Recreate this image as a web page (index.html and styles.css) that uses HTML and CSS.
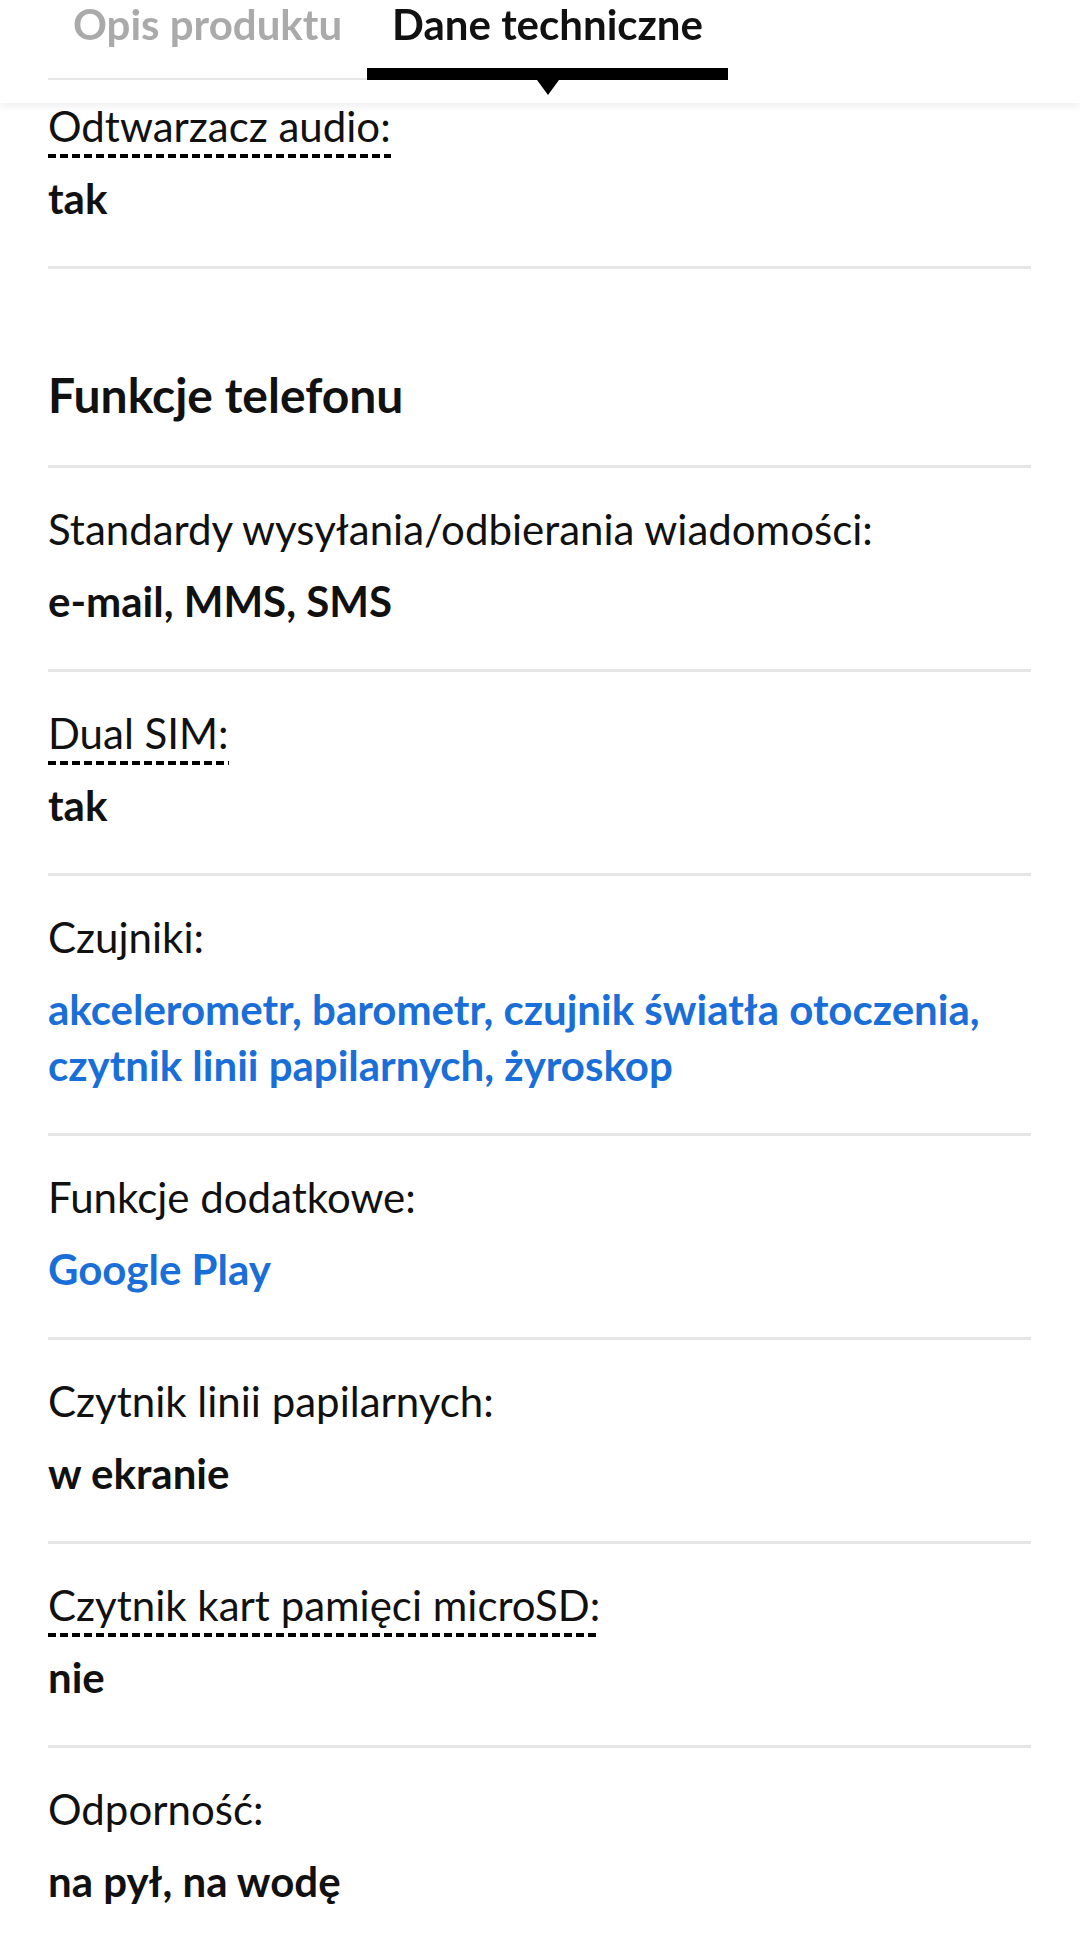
FILE: index.html
```html
<!DOCTYPE html>
<html lang="pl">
<head>
    <meta charset="UTF-8">
    <meta name="viewport" content="width=device-width, initial-scale=1.0">
    <title>Dane techniczne</title>
    <link rel="stylesheet" href="styles.css">
</head>
<body>
    <header class="tabs-bar">
        <nav class="tabs">
            <a class="tab" href="#opis">Opis produktu</a>
            <a class="tab active" href="#dane">Dane techniczne</a>
        </nav>
    </header>

    <main class="specs" id="dane">
        <div class="spec">
            <div class="spec-label"><span class="term">Odtwarzacz audio:</span></div>
            <div class="spec-value">tak</div>
        </div>

        <h2 class="spec-group">Funkcje telefonu</h2>

        <div class="spec">
            <div class="spec-label">Standardy wysyłania/odbierania wiadomości:</div>
            <div class="spec-value">e-mail, MMS, SMS</div>
        </div>
        <div class="spec">
            <div class="spec-label"><span class="term">Dual SIM:</span></div>
            <div class="spec-value">tak</div>
        </div>
        <div class="spec">
            <div class="spec-label">Czujniki:</div>
            <div class="spec-value links">
                <a href="#">akcelerometr</a>, <a href="#">barometr</a>, <a href="#">czujnik światła otoczenia</a>, <a href="#">czytnik linii papilarnych</a>, <a href="#">żyroskop</a>
            </div>
        </div>
        <div class="spec">
            <div class="spec-label">Funkcje dodatkowe:</div>
            <div class="spec-value links"><a href="#">Google Play</a></div>
        </div>
        <div class="spec">
            <div class="spec-label">Czytnik linii papilarnych:</div>
            <div class="spec-value">w ekranie</div>
        </div>
        <div class="spec">
            <div class="spec-label"><span class="term">Czytnik kart pamięci microSD:</span></div>
            <div class="spec-value">nie</div>
        </div>
        <div class="spec">
            <div class="spec-label">Odporność:</div>
            <div class="spec-value">na pył, na wodę</div>
        </div>
    </main>
</body>
</html>
```

FILE: styles.css
```css
body {
    margin: 0;
    font-family: Lato, "Open Sans", sans-serif;
    color: #111;
    background: #fff;
}
.tabs-bar {
    position: fixed;
    top: 0;
    left: 0;
    right: 0;
    height: 103px;
    background: white;
    box-shadow: 0 3px 8px rgba(0,0,0,0.07);
    z-index: 10;
}
.tabs {
    display: flex;
    padding-left: 48px;
}
.tab {
    position: relative;
    box-sizing: border-box;
    height: 80px;
    padding: 0 25px;
    border-bottom: 2px solid #e8e8e8;
    font-size: 42px;
    font-weight: 700;
    line-height: 48px;
    color: #aaa;
    text-decoration: none;
}
.tab.active {
    color: #111;
    border-bottom: 12px solid #000;
}
.tab.active::after {
    content: "";
    position: absolute;
    left: 50%;
    bottom: -27px;
    margin-left: -11px;
    border-left: 11px solid transparent;
    border-right: 11px solid transparent;
    border-top: 15px solid #000;
}
.specs {
    margin: 62px 49px 0 48px;
}
.spec {
    border-top: 3px solid #e6e6e6;
    padding: 33px 0 40px;
    font-size: 42px;
    line-height: 56px;
}
.spec-label {
    font-weight: 400;
}
.spec-value {
    margin-top: 16px;
    font-weight: 700;
}
.links,
.links a {
    color: #1a6ed8;
    text-decoration: none;
}
.term {
    padding-bottom: 7px;
    background-image: linear-gradient(to right, #000 8px, transparent 8px);
    background-size: 12px 4px;
    background-repeat: repeat-x;
    background-position: left bottom;
}
.spec-group {
    margin: 0;
    border-top: 3px solid #e6e6e6;
    padding: 98px 0 42px;
    font-size: 48px;
    font-weight: 700;
    line-height: 56px;
}
```
